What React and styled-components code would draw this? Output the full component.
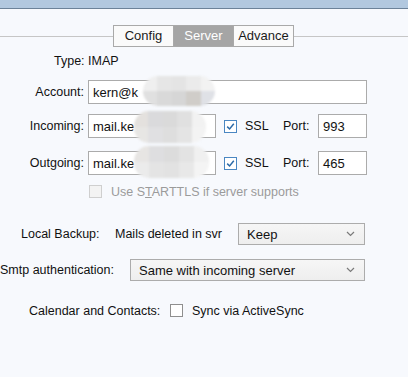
import styled, { createGlobalStyle } from 'styled-components';

const GlobalStyle = createGlobalStyle`
  html, body {
    margin: 0;
    padding: 0;
    background: #f7f9fd;
  }
  body {
    font-family: "Liberation Sans", Arial, sans-serif;
    font-size: 12.5px;
    color: #111;
  }
`;

const accountCells = ['#efefef', '#e6e6e6', '#e4e4e4', '#ebebeb', '#f2f2f2', '#e0e0e0', '#d9d9d9', '#d6d6d6', '#d0cdc9', '#dfe1e6'];
const incomingCells = ['#e4e1de', '#dadadc', '#dadada', '#e0e0e0', '#f2f2f2', '#e7e6e4', '#e0e0e2', '#dedede', '#e4e4e4', '#f3f3f3'];
const outgoingCells = ['#e7e5e3', '#dedee0', '#dcdcdc', '#e3e3e3', '#f0f0f0', '#ebebeb', '#e4e4e4', '#e2e2e2', '#e8e8e8', '#f4f4f4'];

const App = () => {
  return (
    <Window>
      <GlobalStyle />
      <TitleBar />
      <Body>
        <TabStrip>
          <Tabs>
            <Tab>Config</Tab>
            <Tab $active>Server</Tab>
            <Tab>Advance</Tab>
          </Tabs>
        </TabStrip>

        <TypeLine>Type: IMAP</TypeLine>

        <FieldRow $mt={10}>
          <Label>Account:</Label>
          <Field $w={279}>
            <InputText>kern@k</InputText>
            <Redact $left={54} $top={-5} $w={72} $h={30}>
              {accountCells.map((c, i) => <Cell key={i} $c={c} />)}
            </Redact>
          </Field>
        </FieldRow>

        <FieldRow $mt={10}>
          <Label>Incoming:</Label>
          <Field $w={128}>
            <InputText>mail.ke</InputText>
            <Redact $left={45} $top={-4} $w={72} $h={32}>
              {incomingCells.map((c, i) => <Cell key={i} $c={c} />)}
            </Redact>
          </Field>
          <SslGroup>
            <CheckBox checked />
            <SslText>SSL</SslText>
            <PortText>Port:</PortText>
            <Field $w={49}>
              <InputText>993</InputText>
            </Field>
          </SslGroup>
        </FieldRow>

        <FieldRow $mt={13}>
          <Label>Outgoing:</Label>
          <Field $w={128}>
            <InputText>mail.ke</InputText>
            <Redact $left={45} $top={-6} $w={75} $h={32}>
              {outgoingCells.map((c, i) => <Cell key={i} $c={c} />)}
            </Redact>
          </Field>
          <SslGroup>
            <CheckBox checked />
            <SslText>SSL</SslText>
            <PortText>Port:</PortText>
            <Field $w={49}>
              <InputText>465</InputText>
            </Field>
          </SslGroup>
        </FieldRow>

        <CheckRow $mt={8} $pl={89} $gap={9}>
          <CheckBox disabled />
          <MutedText>
            Use S<u>T</u>ARTTLS if server supports
          </MutedText>
        </CheckRow>

        <SelectRow $mt={23} $pl={21}>
          <RowText $w={94}>Local Backup:</RowText>
          <RowText $w={123}>Mails deleted in svr</RowText>
          <Select $w={127}>Keep</Select>
        </SelectRow>

        <SelectRow $mt={14} $pl={0}>
          <RowText $w={130}>Smtp authentication:</RowText>
          <Select $w={235}>Same with incoming server</Select>
        </SelectRow>

        <CheckRow $mt={21} $pl={29} $gap={0}>
          <RowText $w={141}>Calendar and Contacts:</RowText>
          <CheckBox />
          <RowText $pl={9}>Sync via ActiveSync</RowText>
        </CheckRow>
      </Body>
    </Window>
  );
};

const CheckBox = ({ checked, disabled }) => (
  <Box $checked={checked} $disabled={disabled}>
    {checked && (
      <svg width="11" height="11" viewBox="0 0 11 11">
        <path d="M2.2 5.6 L4.6 8 L8.8 2.8" fill="none" stroke="#2b6aa8" strokeWidth="1.5" />
      </svg>
    )}
  </Box>
);

const Select = ({ $w, children }) => (
  <SelectBox $w={$w}>
    <span>{children}</span>
    <svg width="9" height="6" viewBox="0 0 9 6">
      <path d="M1 1 L4.5 4.5 L8 1" fill="none" stroke="#7a7a7a" strokeWidth="1.2" />
    </svg>
  </SelectBox>
);

export default App;

const Window = styled.div`
  width: 408px;
  height: 377px;
  overflow: hidden;
  background: #f7f9fd;
`;

const TitleBar = styled.div`
  height: 8px;
  background: #b2c8df;
  border-bottom: 1px solid #6c8299;
`;

const Body = styled.div`
  padding-top: 16px;
`;

const TabStrip = styled.div`
  display: flex;
  align-items: center;
  &::before,
  &::after {
    content: '';
    height: 1px;
    background: #c6c6c6;
  }
  &::before {
    width: 113px;
  }
  &::after {
    flex: 1;
  }
`;

const Tabs = styled.div`
  display: flex;
  border: 1px solid #a9a9a9;
`;

const Tab = styled.div`
  width: 59px;
  height: 20px;
  line-height: 20px;
  text-align: center;
  font-size: 13px;
  color: ${(p) => (p.$active ? '#ffffff' : '#1a1a1a')};
  background: ${(p) => (p.$active ? '#a5a5a5' : '#fafafa')};
  & + & {
    border-left: 1px solid #a9a9a9;
  }
`;

const TypeLine = styled.div`
  margin-top: 6px;
  padding-left: 54px;
  line-height: 17px;
`;

const FieldRow = styled.div`
  display: flex;
  align-items: center;
  margin-top: ${(p) => p.$mt}px;
`;

const Label = styled.div`
  width: 84px;
  margin-right: 4px;
  text-align: right;
`;

const Field = styled.div`
  position: relative;
  box-sizing: border-box;
  width: ${(p) => p.$w}px;
  height: 24px;
  border: 1px solid #ababab;
  background: #ffffff;
  display: flex;
  align-items: center;
  padding-left: 4px;
`;

const InputText = styled.span`
  font-size: 13px;
  color: #111;
`;

const Redact = styled.div`
  position: absolute;
  left: ${(p) => p.$left}px;
  top: ${(p) => p.$top}px;
  width: ${(p) => p.$w}px;
  height: ${(p) => p.$h}px;
  display: grid;
  grid-template-columns: repeat(5, 1fr);
  grid-template-rows: repeat(2, 1fr);
  border-radius: 15px;
  overflow: hidden;
  filter: blur(0.8px);
`;

const Cell = styled.div`
  background: ${(p) => p.$c};
`;

const SslGroup = styled.div`
  display: flex;
  align-items: center;
  margin-left: 8px;
`;

const SslText = styled.span`
  width: 38px;
  margin-left: 8px;
`;

const PortText = styled.span`
  width: 35px;
`;

const Box = styled.div`
  box-sizing: border-box;
  width: 13px;
  height: 13px;
  display: flex;
  align-items: center;
  justify-content: center;
  border: 1px solid
    ${(p) => (p.$checked ? '#4a87c2' : p.$disabled ? '#cfcfcf' : '#8f8f8f')};
  background: ${(p) => (p.$disabled ? '#f3f3f3' : '#ffffff')};
`;

const CheckRow = styled.div`
  display: flex;
  align-items: center;
  height: 17px;
  gap: ${(p) => p.$gap}px;
  margin-top: ${(p) => p.$mt}px;
  padding-left: ${(p) => p.$pl}px;
`;

const MutedText = styled.span`
  color: #9b9b9b;
  u {
    text-decoration-thickness: 1px;
  }
`;

const SelectRow = styled.div`
  display: flex;
  align-items: center;
  margin-top: ${(p) => p.$mt}px;
  padding-left: ${(p) => p.$pl}px;
`;

const RowText = styled.span`
  flex: none;
  width: ${(p) => (p.$w ? `${p.$w}px` : 'auto')};
  padding-left: ${(p) => p.$pl || 0}px;
  white-space: nowrap;
`;

const SelectBox = styled.div`
  box-sizing: border-box;
  width: ${(p) => p.$w}px;
  height: 22px;
  border: 1px solid #acacac;
  background: linear-gradient(#f6f6f6, #eeeeee);
  display: flex;
  align-items: center;
  justify-content: space-between;
  padding: 0 9px 0 8px;
  font-size: 13px;
`;
